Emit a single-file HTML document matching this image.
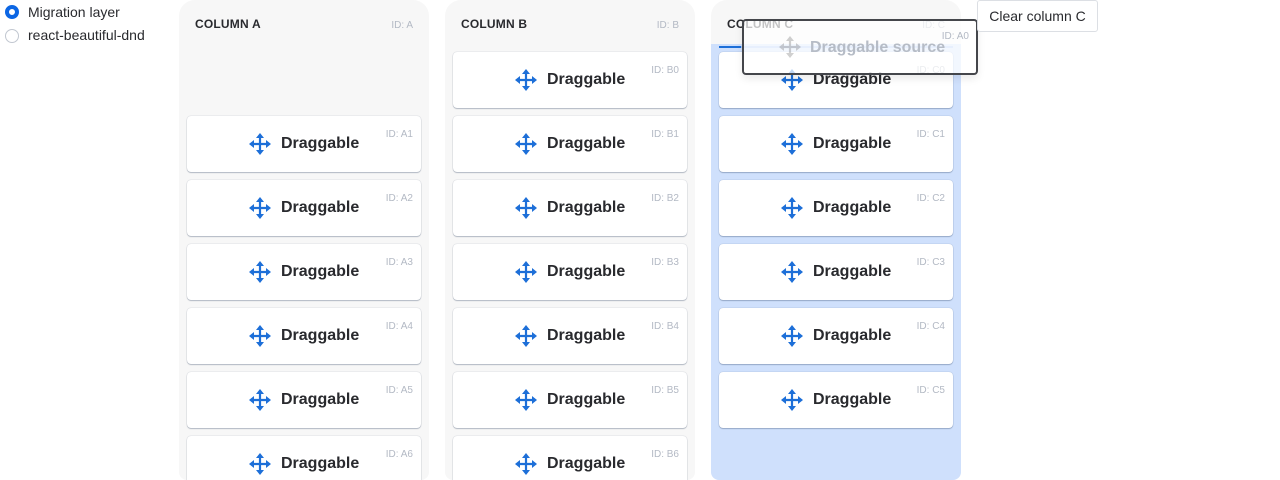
<!DOCTYPE html>
<html style="overflow:hidden;height:480px"><head><meta charset="utf-8"><style>
*{box-sizing:border-box;margin:0;padding:0}
body{width:1280px;height:480px;overflow:hidden;background:#fff;font-family:"Liberation Sans",sans-serif;color:#172b4d;position:relative}
.radio{position:absolute;left:5px;width:14px;height:14px;border-radius:50%;border:1px solid #c1c7d0;background:#fff}
.radio.on{border:4px solid #0c66e4}
.rl{position:absolute;left:28px;font-size:14px;color:#292a2e}
.col{position:absolute;top:0;width:250px;height:480px;overflow:hidden;background:#f7f7f7;border-radius:16px 16px 8px 8px}
.ch{position:absolute;left:16px;top:17px;font-size:12px;font-weight:bold;color:#292a2e;letter-spacing:.2px}
.cid{position:absolute;right:16px;top:20px;font-size:10px;color:#b3b9c4}
.card{position:absolute;left:8px;width:234px;height:56px;background:#fff;border-radius:4px;box-shadow:0 1px 1px rgba(9,30,66,.25),0 0 1px rgba(9,30,66,.31)}
.card .id{position:absolute;right:8px;top:13px;font-size:10px;color:#b3b9c4}
.card svg{position:absolute;left:62px;top:17px}
.card .t{position:absolute;left:94px;top:19px;font-size:16px;font-weight:bold;color:#292a2e}
.btn{position:absolute;left:977px;top:0;width:121px;height:32px;border:1px solid #dcdfe4;border-radius:3px;font-size:14px;color:#292a2e;text-align:center;line-height:30px;background:#fff}
</style></head><body>
<div class="radio on" style="top:5px"></div><div class="rl" style="top:4px">Migration layer</div>
<div class="radio" style="top:29px"></div><div class="rl" style="top:27px">react-beautiful-dnd</div>

<svg width="0" height="0" style="position:absolute"><defs><g id="mv"><path d="M11 3V19M3 11H19" stroke="#1d6fd8" stroke-width="2.2" fill="none"/><path d="M11 0L15 5H7Z M11 22L15 17H7Z M0 11L5 7V15Z M22 11L17 7V15Z" fill="#1d6fd8"/></g></defs></svg>

<div class="col" style="left:179px"><div class="ch">COLUMN A</div><div class="cid">ID: A</div>
<div class="card" style="top:116px"><svg width="22" height="22"><use href="#mv"/></svg><div class="t">Draggable</div><div class="id">ID: A1</div></div>
<div class="card" style="top:180px"><svg width="22" height="22"><use href="#mv"/></svg><div class="t">Draggable</div><div class="id">ID: A2</div></div>
<div class="card" style="top:244px"><svg width="22" height="22"><use href="#mv"/></svg><div class="t">Draggable</div><div class="id">ID: A3</div></div>
<div class="card" style="top:308px"><svg width="22" height="22"><use href="#mv"/></svg><div class="t">Draggable</div><div class="id">ID: A4</div></div>
<div class="card" style="top:372px"><svg width="22" height="22"><use href="#mv"/></svg><div class="t">Draggable</div><div class="id">ID: A5</div></div>
<div class="card" style="top:436px"><svg width="22" height="22"><use href="#mv"/></svg><div class="t">Draggable</div><div class="id">ID: A6</div></div>
</div>

<div class="col" style="left:445px"><div class="ch">COLUMN B</div><div class="cid">ID: B</div>
<div class="card" style="top:52px"><svg width="22" height="22"><use href="#mv"/></svg><div class="t">Draggable</div><div class="id">ID: B0</div></div>
<div class="card" style="top:116px"><svg width="22" height="22"><use href="#mv"/></svg><div class="t">Draggable</div><div class="id">ID: B1</div></div>
<div class="card" style="top:180px"><svg width="22" height="22"><use href="#mv"/></svg><div class="t">Draggable</div><div class="id">ID: B2</div></div>
<div class="card" style="top:244px"><svg width="22" height="22"><use href="#mv"/></svg><div class="t">Draggable</div><div class="id">ID: B3</div></div>
<div class="card" style="top:308px"><svg width="22" height="22"><use href="#mv"/></svg><div class="t">Draggable</div><div class="id">ID: B4</div></div>
<div class="card" style="top:372px"><svg width="22" height="22"><use href="#mv"/></svg><div class="t">Draggable</div><div class="id">ID: B5</div></div>
<div class="card" style="top:436px"><svg width="22" height="22"><use href="#mv"/></svg><div class="t">Draggable</div><div class="id">ID: B6</div></div>
</div>

<div class="col" style="left:711px"><div class="ch">COLUMN C</div><div class="cid">ID: C</div>
<div style="position:absolute;left:0;top:44px;width:250px;height:440px;background:#cfe0fc"></div>
<div style="position:absolute;left:8px;top:46px;width:234px;height:2px;background:#a9c6f7"></div>
<div style="position:absolute;left:8px;top:46px;width:22px;height:2px;background:#1d6fd8"></div>
<div class="card" style="top:52px"><svg width="22" height="22"><use href="#mv"/></svg><div class="t">Draggable</div><div class="id">ID: C0</div></div>
<div class="card" style="top:116px"><svg width="22" height="22"><use href="#mv"/></svg><div class="t">Draggable</div><div class="id">ID: C1</div></div>
<div class="card" style="top:180px"><svg width="22" height="22"><use href="#mv"/></svg><div class="t">Draggable</div><div class="id">ID: C2</div></div>
<div class="card" style="top:244px"><svg width="22" height="22"><use href="#mv"/></svg><div class="t">Draggable</div><div class="id">ID: C3</div></div>
<div class="card" style="top:308px"><svg width="22" height="22"><use href="#mv"/></svg><div class="t">Draggable</div><div class="id">ID: C4</div></div>
<div class="card" style="top:372px"><svg width="22" height="22"><use href="#mv"/></svg><div class="t">Draggable</div><div class="id">ID: C5</div></div>
</div>

<div style="position:absolute;left:742px;top:19px;width:236px;height:56px;border:2px solid #44464b;border-radius:4px;background:rgba(255,255,255,.72);box-shadow:0 4px 8px rgba(0,0,0,.08)">
<svg width="22" height="22" style="position:absolute;left:35px;top:15px;opacity:.3"><use href="#mv" style="filter:grayscale(1)"/></svg>
<div style="position:absolute;left:66px;top:18px;font-size:16px;font-weight:bold;color:#b6bcc6">Draggable source</div>
<div style="position:absolute;right:7px;top:10px;font-size:10px;color:#b3b9c4">ID: A0</div>
</div>

<div class="btn">Clear column C</div>
</body></html>
